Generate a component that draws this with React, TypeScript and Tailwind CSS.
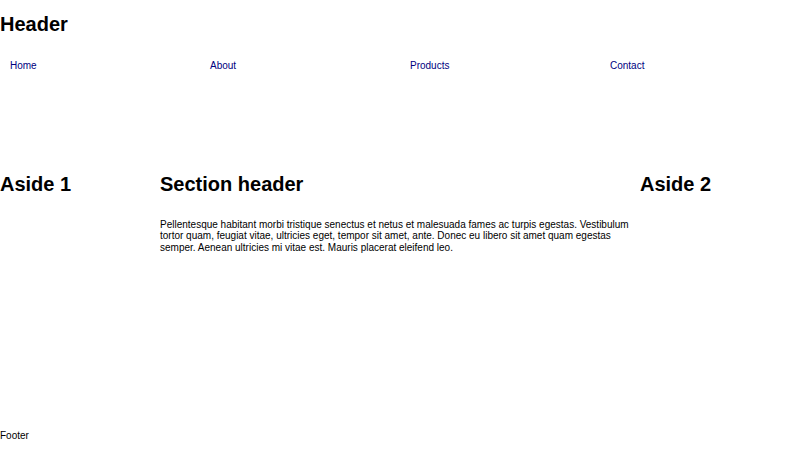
import React from "react";

export default function App() {
  const links = ["Home", "About", "Products", "Contact"];
  return (
    <div className="h-[450px] w-[800px] flex flex-col bg-white text-black font-['Liberation_Sans',Arial,sans-serif]">
      <header className="pt-[13px]">
        <h1 className="text-[20px] font-bold leading-[23px]">Header</h1>
      </header>
      <nav className="mt-[24px] grid grid-cols-4">
        {links.map((l) => (
          <a key={l} href="#" className="px-[10px] text-[10px] leading-[11.5px] text-[#000080]">
            {l}
          </a>
        ))}
      </nav>
      <div className="mt-[101px] grid grid-cols-[160px_480px_160px]">
        <aside>
          <h2 className="text-[20px] font-bold leading-[23px]">Aside 1</h2>
        </aside>
        <main>
          <h2 className="text-[20px] font-bold leading-[23px]">Section header</h2>
          <p className="mt-[23px] text-[10px] leading-[11.5px]">
            Pellentesque habitant morbi tristique senectus et netus et malesuada fames ac turpis egestas. Vestibulum tortor quam, feugiat vitae, ultricies eget, tempor sit amet, ante. Donec eu libero sit amet quam egestas semper. Aenean ultricies mi vitae est. Mauris placerat eleifend leo.
          </p>
        </main>
        <aside>
          <h2 className="text-[20px] font-bold leading-[23px]">Aside 2</h2>
        </aside>
      </div>
      <footer className="mt-auto pb-[9px] text-[10px] leading-[11.5px]">Footer</footer>
    </div>
  );
}
